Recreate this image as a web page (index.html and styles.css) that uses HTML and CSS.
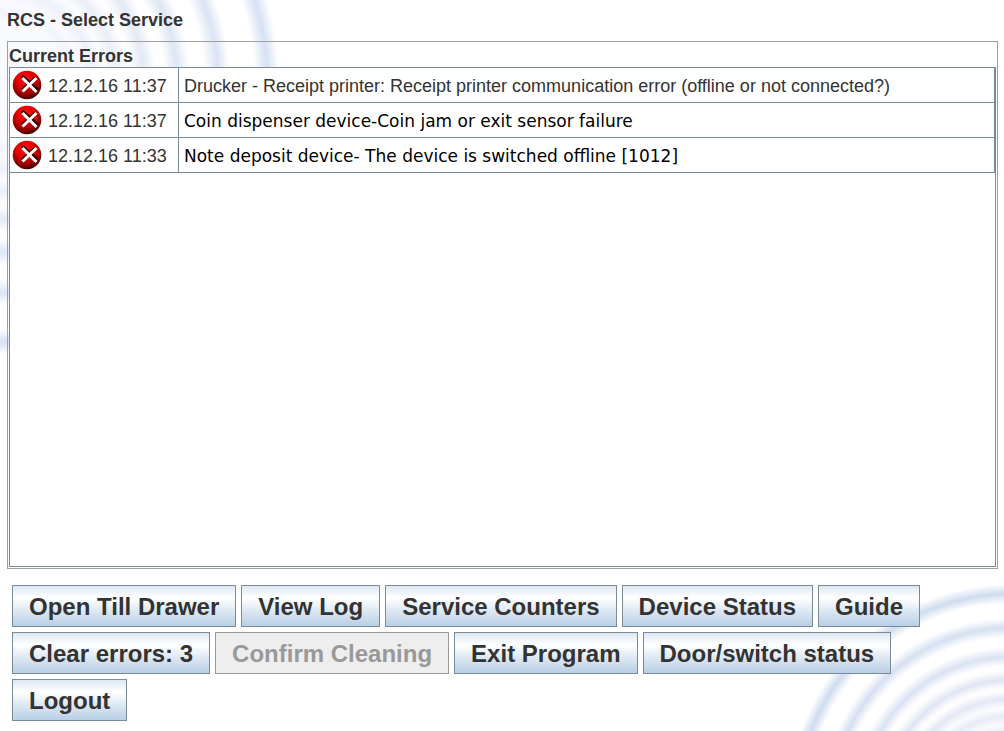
FILE: index.html
```html
<!DOCTYPE html>
<html lang="en">
<head>
    <meta charset="UTF-8">
    <meta name="viewport" content="width=device-width, initial-scale=1.0">
    <title>RCS - Select Service</title>
    <link rel="stylesheet" href="styles.css">
</head>
<body>
    <svg class="defs" width="0" height="0" aria-hidden="true">
        <defs>
            <radialGradient id="ball" cx="0.45" cy="0.3" r="0.7">
                <stop offset="0" stop-color="#ff1414"/>
                <stop offset="0.45" stop-color="#e00000"/>
                <stop offset="0.8" stop-color="#8c0000"/>
                <stop offset="1" stop-color="#3c0000"/>
            </radialGradient>
        </defs>
        <symbol id="error" viewBox="0 0 30 30">
            <circle cx="15" cy="15" r="14.3" fill="url(#ball)"/>
            <path d="M10 6l16 14M23 8L10 20" stroke="#300" stroke-width="3" fill="none"/>
            <path d="M10.5 8l14 14M24.500 8L10.500 21.500" stroke="#fff" stroke-width="3" fill="none"/>
        </symbol>
    </svg>

    <h1 class="title">RCS - Select Service</h1>

    <main class="panel">
        <h2 class="panel-title" id="errorsTitle">Current Errors</h2>
        <div class="error-list">
            <table class="errors" aria-labelledby="errorsTitle">
                <tr>
                    <td class="time"><div class="stamp"><svg class="icon"><use href="#error"/></svg><span>12.12.16 11:37</span></div></td>
                    <td>Drucker - Receipt printer: Receipt printer communication error (offline or not connected?)</td>
                </tr>
                <tr>
                    <td class="time"><div class="stamp"><svg class="icon"><use href="#error"/></svg><span>12.12.16 11:37</span></div></td>
                    <td class="device">Coin dispenser device-Coin jam or exit sensor failure</td>
                </tr>
                <tr>
                    <td class="time"><div class="stamp"><svg class="icon"><use href="#error"/></svg><span>12.12.16 11:33</span></div></td>
                    <td class="device">Note deposit device- The device is switched offline [1012]</td>
                </tr>
            </table>
        </div>
    </main>

    <div class="actions">
        <button type="button">Open Till Drawer</button>
        <button type="button">View Log</button>
        <button type="button">Service Counters</button>
        <button type="button">Device Status</button>
        <button type="button">Guide</button>
        <button type="button">Clear errors: 3</button>
        <button type="button" disabled>Confirm Cleaning</button>
        <button type="button">Exit Program</button>
        <button type="button">Door/switch status</button>
        <button type="button">Logout</button>
    </div>
</body>
</html>
```
FILE: styles.css
```css
* {
    box-sizing: border-box;
}

body {
    display: flex;
    flex-direction: column;
    min-height: 100vh;
    margin: 0;
    padding: 8px 6px 10px 7px;
    font-family: "Liberation Sans", Arial, sans-serif;
    font-size: 18px;
    color: #333;
    background-color: #fff;
    /* ripples in the top left and bottom right corners */
    background-image:
        radial-gradient(circle at 5px 80px,
            #f9fafd 60px, #f3f5fc 66px, #fafafe 76px, #eef1fa 88px,
            #fcfcfe 99px, #e9eef8 111px, #fdfdfe 122px, #fdfdfe 126px, #e3e9f6 139px,
            #fefefe 151px, #fefefe 159px, #dde6f5 172px, #fff 185px, #fff 199px,
            #dae4f4 213px, #fff 225px, #fff 249px, #d6e1f3 262px,
            rgba(255, 255, 255, 0) 274px),
        radial-gradient(circle at calc(100% + 6px) calc(100% + 76px),
            #f6f6fc 70px, #ececf8 76px, #fafafd 83px, #e8eaf7 91px,
            #fcfcfe 99px, #e4e8f6 108px, #fdfdfe 116px, #fdfdfe 119px, #dfe5f4 127px,
            #fefefe 136px, #fefefe 141px, #dae2f3 150px, #fff 160px, #fff 169px, #d6e0f1 179px,
            #fff 189px, #fff 203px, #cfdcee 213px,
            rgba(255, 255, 255, 0) 223px);
    background-repeat: no-repeat;
}

.defs {
    position: absolute;
}

.title {
    margin: 0;
    font-size: 18px;
    line-height: 24px;
}

.panel {
    display: flex;
    flex: 1;
    flex-direction: column;
    margin-top: 9px;
    padding: 1px;
    border: 1px solid #a0a0a0;
}

.panel-title {
    margin: 0;
    padding-top: 2px;
    font-size: 18px;
    line-height: 22px;
}

.error-list {
    flex: 1;
    border: 1px solid #7a8a99;
    background-color: #fff;
}

.errors {
    width: 100%;
    border-collapse: separate;
    border-spacing: 0;
    border-right: 1px solid #7a8a99;
}

.errors td {
    height: 35px;
    padding: 2px 5px 0;
    border-bottom: 1px solid #7a8a99;
}

.errors .time {
    width: 169px;
    padding: 0 0 0 2px;
    border-right: 1px solid #7a8a99;
    white-space: nowrap;
}

.stamp {
    display: flex;
    align-items: center;
    gap: 6px;
}

.stamp span {
    padding-top: 2px;
}

.icon {
    width: 30px;
    height: 30px;
}

.errors .device {
    font-family: "DejaVu Sans", Verdana, sans-serif;
    font-size: 17px;
    color: #000;
}

.actions {
    display: flex;
    flex-wrap: wrap;
    gap: 5px;
    margin-top: 16px;
    padding: 0 5px;
}

button {
    height: 42px;
    padding: 2px 16px 0;
    font-family: inherit;
    font-size: 24px;
    font-weight: bold;
    color: #333;
    background: linear-gradient(#dde8f3 0%, #fff 30%, #dde8f3 62%, #b8cfe5 100%);
    border: 1px solid #7a8a99;
}

button:disabled {
    color: #999;
    background: #eee;
    border-color: #999;
}
```
